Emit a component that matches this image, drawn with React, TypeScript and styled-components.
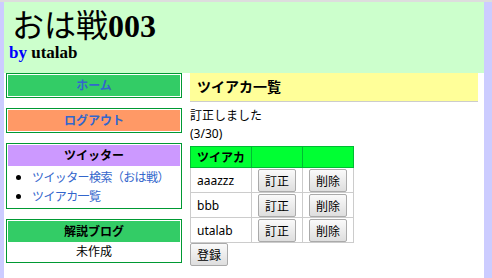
import styled, { createGlobalStyle } from 'styled-components';

const GlobalStyle = createGlobalStyle`
  body {
    margin: 0;
    background: #ccccff;
    font-family: "Noto Sans", "Noto Sans CJK JP", sans-serif;
    font-size: 12px;
    color: #000;
  }
`;

const Page = styled.div`
  border-top: 2px solid #dddddd;
  padding: 0 8px 4px 4px;
`;

const Container = styled.div`
  width: 480px;
  background: #ffffff;
  padding-bottom: 12px;
`;

const Header = styled.div`
  height: 71px;
  background: #ccffcc;
  padding: 0 5px;
  box-sizing: border-box;
`;

const Title = styled.h1`
  margin: 0;
  padding: 7px 0 0 3px;
  height: 34px;
  font-family: "Liberation Serif", "Noto Sans CJK JP", serif;
  font-size: 32px;
  line-height: 34px;
  font-weight: normal;

  b {
    font-weight: bold;
  }
`;

const ByLine = styled.div`
  font-family: "Liberation Serif", serif;
  font-size: 17px;
  font-weight: bold;
  line-height: 20px;

  span {
    color: #0000ff;
  }
`;

const Body = styled.div`
  display: flex;
  gap: 8px;
  padding: 0 6px 0 2px;
`;

const Side = styled.div`
  width: 176px;
  display: flex;
  flex-direction: column;
  gap: 10px;
`;

const Box = styled.div`
  border: 1px solid #009933;
  padding: 1px;
  text-align: center;
`;

const BoxHead = styled.div<{ $bg: string }>`
  background: ${(p) => p.$bg};
  height: 21px;
  line-height: 21px;
  font-weight: bold;

  a {
    color: #3366cc;
    text-decoration: none;
  }
`;

const LinkList = styled.ul`
  margin: 0;
  padding: 1px 0 2px 24px;
  text-align: left;
  line-height: 19px;
  font-family: "Noto Sans CJK JP", sans-serif;

  li {
    white-space: nowrap;
  }

  a {
    color: #3366cc;
    text-decoration: none;
    letter-spacing: -0.6px;
  }
`;

const Note = styled.div`
  line-height: 19px;
`;

const Main = styled.div`
  flex: 1;
`;

const Heading = styled.h2`
  margin: 0;
  height: 28px;
  line-height: 28px;
  padding-left: 7px;
  background: #ffff99;
  border-bottom: 1px solid #cccccc;
  font-size: 14px;
  font-weight: bold;
`;

const Message = styled.div`
  padding-top: 5px;
  line-height: 18px;
`;

const Table = styled.table`
  border-collapse: collapse;
  margin-top: 3px;

  th {
    background: #00ff33;
    border: 1px solid #00bb33;
    height: 20px;
    padding: 0 6px;
    text-align: left;
    font-weight: bold;
  }

  td {
    border: 1px solid #cccccc;
    height: 24px;
    padding: 0 6px;
  }
`;

const Button = styled.button`
  font-family: "Noto Sans CJK JP", sans-serif;
  font-size: 12px;
  height: 23px;
  padding: 0 6px;
  border: 1px solid #aaaaaa;
  border-radius: 2px;
  background: linear-gradient(#fafafa, #dedede);
  color: #000;
  display: block;
`;

const rows = ['aaazzz', 'bbb', 'utalab'];

export default function App() {
  return (
    <Page>
      <GlobalStyle />
      <Container>
        <Header>
          <Title>
            おは戦<b>003</b>
          </Title>
          <ByLine>
            <span>by</span> utalab
          </ByLine>
        </Header>
        <Body>
          <Side>
            <Box>
              <BoxHead $bg="#33cc66">
                <a href="#">ホーム</a>
              </BoxHead>
            </Box>
            <Box>
              <BoxHead $bg="#ff9966">
                <a href="#">ログアウト</a>
              </BoxHead>
            </Box>
            <Box>
              <BoxHead $bg="#cc99ff">ツイッター</BoxHead>
              <LinkList>
                <li>
                  <a href="#">ツイッター検索（おは戦）</a>
                </li>
                <li>
                  <a href="#">ツイアカ一覧</a>
                </li>
              </LinkList>
            </Box>
            <Box>
              <BoxHead $bg="#33cc66">解説ブログ</BoxHead>
              <Note>未作成</Note>
            </Box>
          </Side>
          <Main>
            <Heading>ツイアカ一覧</Heading>
            <Message>
              訂正しました
              <br />
              (3/30)
            </Message>
            <Table>
              <thead>
                <tr>
                  <th>ツイアカ</th>
                  <th></th>
                  <th></th>
                </tr>
              </thead>
              <tbody>
                {rows.map((name) => (
                  <tr key={name}>
                    <td>{name}</td>
                    <td>
                      <Button>訂正</Button>
                    </td>
                    <td>
                      <Button>削除</Button>
                    </td>
                  </tr>
                ))}
              </tbody>
            </Table>
            <Button>登録</Button>
          </Main>
        </Body>
      </Container>
    </Page>
  );
}
